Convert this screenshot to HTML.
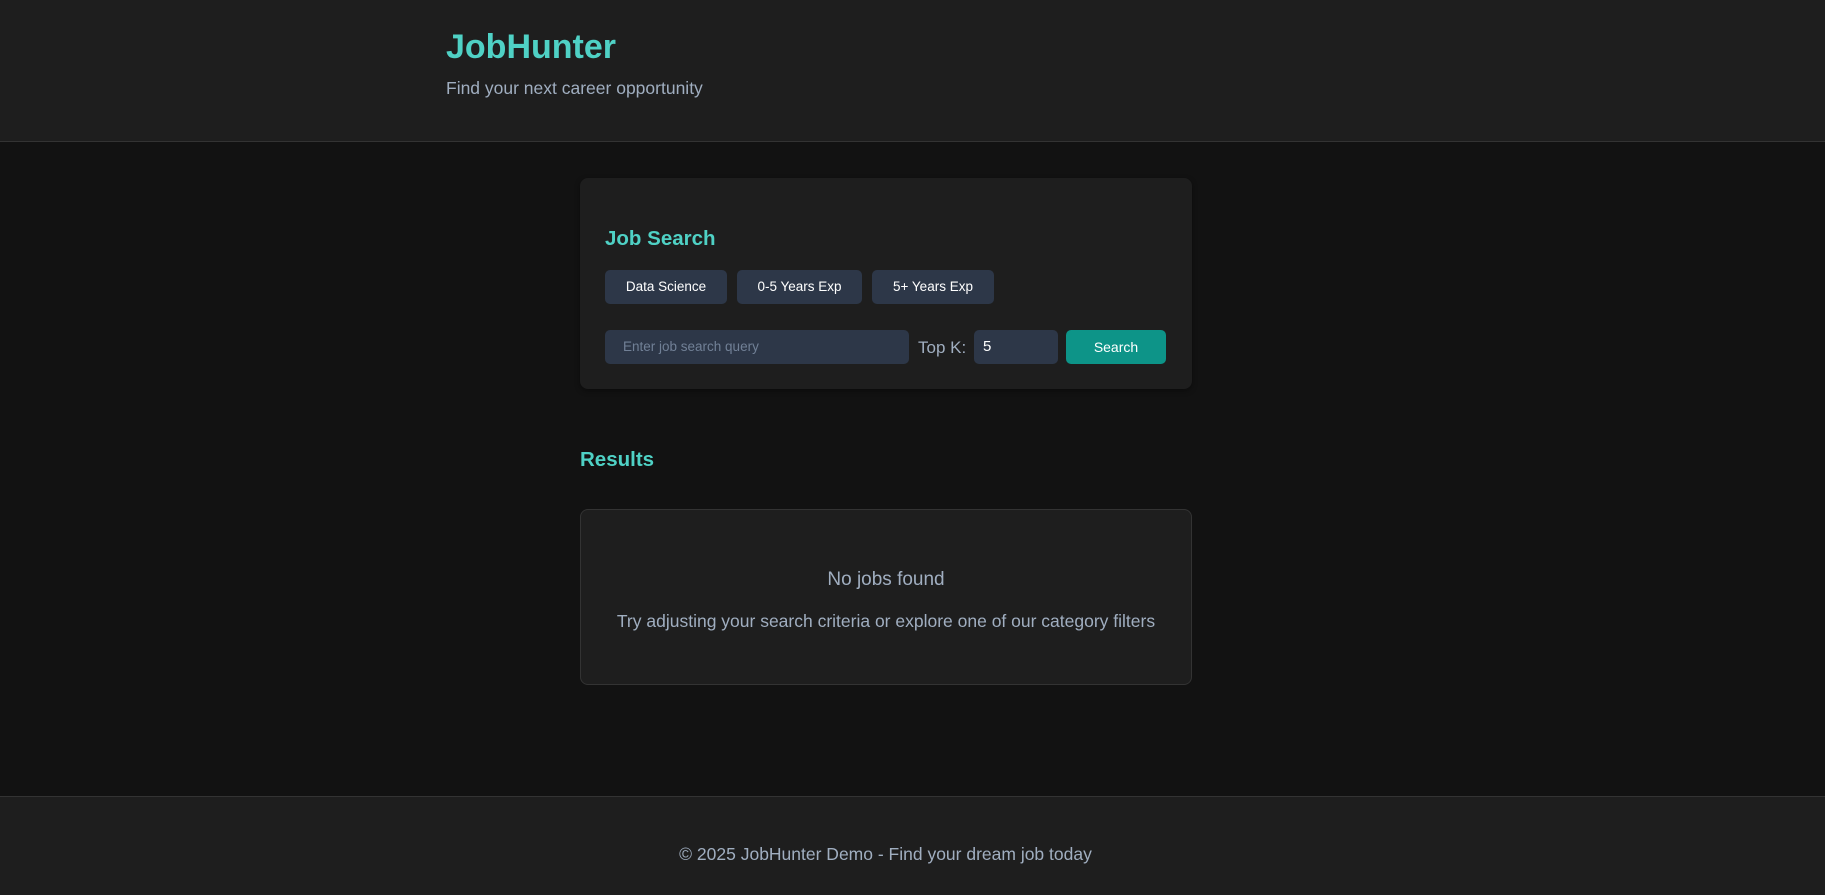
<!DOCTYPE html>
<html><head><meta charset="utf-8"><style>
*{box-sizing:border-box;margin:0;padding:0}
body{width:1825px;height:895px;background:#121212;font-family:"Liberation Sans",sans-serif;position:relative;overflow:hidden}
.a{position:absolute}
header{position:absolute;left:0;top:0;width:1825px;height:142px;background:#1e1e1e;border-bottom:1px solid #333}
footer{position:absolute;left:0;top:796px;width:1825px;height:99px;background:#1e1e1e;border-top:1px solid #333}
.t{color:#4fd1c5;font-weight:bold}
.g{color:#a0aec0}
.card{background:#1e1e1e;border-radius:8px}
.chip{background:#2d3748;color:#fff;font-size:13.5px;border-radius:5px;height:34px;line-height:34px;text-align:center}
</style></head><body>
<header>
<div class="a t" style="left:446px;top:28px;font-size:34px;">JobHunter</div>
<div class="a g" style="left:446px;top:78px;font-size:17.5px;">Find your next career opportunity</div>
</header>
<div class="a card" style="left:580px;top:178px;width:612px;height:211px;box-shadow:0 2px 6px rgba(0,0,0,.4)"></div>
<div class="a t" style="left:605px;top:227px;font-size:20.5px;">Job Search</div>
<div class="a chip" style="left:605px;top:270px;width:122px">Data Science</div>
<div class="a chip" style="left:737px;top:270px;width:125px">0-5 Years Exp</div>
<div class="a chip" style="left:872px;top:270px;width:122px">5+ Years Exp</div>
<div class="a" style="left:605px;top:330px;width:304px;height:34px;background:#2d3748;border-radius:5px;color:#718096;font-size:13.5px;line-height:34px;padding-left:18px">Enter job search query</div>
<div class="a g" style="left:918px;top:338px;font-size:17px;">Top K:</div>
<div class="a" style="left:974px;top:330px;width:84px;height:34px;background:#2d3748;border-radius:5px;color:#fff;font-size:15px;line-height:34px;padding-left:9px">5</div>
<div class="a" style="left:1066px;top:330px;width:100px;height:34px;background:#0d9488;border-radius:5px;color:#fff;font-size:14px;line-height:34px;text-align:center">Search</div>
<div class="a t" style="left:580px;top:448px;font-size:20.5px;">Results</div>
<div class="a card" style="left:580px;top:509px;width:612px;height:176px;border:1px solid #333"></div>
<div class="a g" style="left:580px;top:569px;width:612px;text-align:center;font-size:19px;">No jobs found</div>
<div class="a g" style="left:580px;top:611px;width:612px;text-align:center;font-size:17.5px;">Try adjusting your search criteria or explore one of our category filters</div>
<footer><div class="a g" style="left:0;top:47px;width:1771px;text-align:center;font-size:17.5px;">© 2025 JobHunter Demo - Find your dream job today</div></footer>
</body></html>
